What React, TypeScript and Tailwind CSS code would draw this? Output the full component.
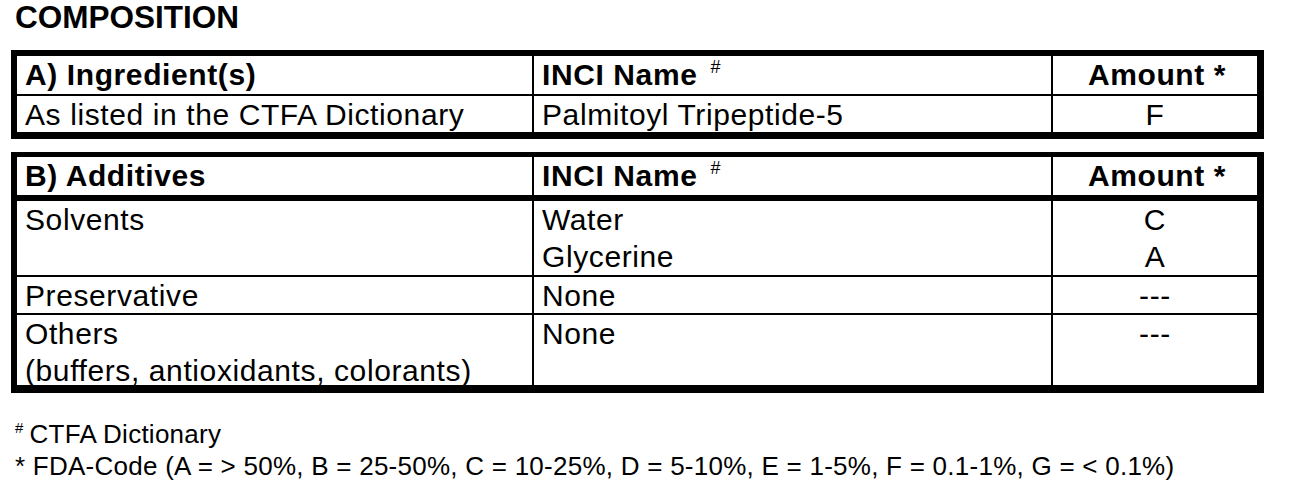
import React from 'react';

const font = { fontFamily: '"Liberation Sans", Arial, sans-serif' };

const Sup: React.FC = () => (
  <span className="relative top-[-12px] ml-[13px] text-[18px] font-normal tracking-normal">#</span>
);

type Row = { label: string[]; inci: string[]; amount: string[]; h: string };

const additives: Row[] = [
  { label: ['Solvents'], inci: ['Water', 'Glycerine'], amount: ['C', 'A'], h: 'h-[74px]' },
  { label: ['Preservative'], inci: ['None'], amount: ['---'], h: 'h-[38px]' },
  {
    label: ['Others', '(buffers, antioxidants, colorants)'],
    inci: ['None'],
    amount: ['---'],
    h: 'h-[72px]',
  },
];

const Lines: React.FC<{ items: string[] }> = ({ items }) => (
  <>
    {items.map((t) => (
      <div key={t}>{t}</div>
    ))}
  </>
);

export default function App() {
  return (
    <div className="min-h-screen bg-white text-black" style={font}>
      <div className="px-[11px] pt-0">
        <h1 className="pl-[4px] text-[31.5px] font-bold leading-[35px]">COMPOSITION</h1>

        {/* A) Ingredients */}
        <div className="mt-[15px] w-[1253px] border-[6px] border-b-[7px] border-r-[7px] border-black text-[30px] leading-[37px] tracking-[0.6px]">
          <div className="flex h-[38px] font-bold">
            <div className="w-[515px] pl-[8px]">A) Ingredient(s)</div>
            <div className="w-[519px] border-l-2 border-black pl-[8px]">
              INCI Name<Sup />
            </div>
            <div className="flex-1 border-l-2 border-black pl-[4px] text-center">Amount *</div>
          </div>
          <div className="flex h-[38px] border-t-2 border-black">
            <div className="w-[515px] pl-[8px]">As listed in the CTFA Dictionary</div>
            <div className="w-[519px] border-l-2 border-black pl-[8px]">Palmitoyl Tripeptide-5</div>
            <div className="flex-1 border-l-2 border-black text-center">F</div>
          </div>
        </div>

        {/* B) Additives */}
        <div className="mt-[13px] w-[1253px] border-[6px] border-t-[5px] border-b-[8px] border-r-[7px] border-black text-[30px] leading-[37px] tracking-[0.6px]">
          <div className="flex h-[44px] border-b-[6px] border-black font-bold">
            <div className="w-[515px] pl-[8px]">B) Additives</div>
            <div className="w-[519px] border-l-2 border-black pl-[8px]">
              INCI Name<Sup />
            </div>
            <div className="flex-1 border-l-2 border-black pl-[4px] text-center">Amount *</div>
          </div>
          {additives.map((r, i) => (
            <div
              key={r.label[0]}
              className={`flex ${r.h} ${i > 0 ? 'border-t-2 border-black' : ''}`}
            >
              <div className="w-[515px] pl-[8px]">
                <Lines items={r.label} />
              </div>
              <div className="w-[519px] border-l-2 border-black pl-[8px]">
                <Lines items={r.inci} />
              </div>
              <div className="flex-1 border-l-2 border-black text-center">
                <Lines items={r.amount} />
              </div>
            </div>
          ))}
        </div>

        <div className="mt-[27px] pl-[4px] text-[26px] leading-[29px] tracking-[0.25px]">
          <div>
            <span className="relative top-[-10px] mr-[6px] text-[15px]">#</span>CTFA Dictionary
          </div>
          <div>
            * FDA-Code (A = &gt; 50%, B = 25-50%, C = 10-25%, D = 5-10%, E = 1-5%, F = 0.1-1%, G = &lt; 0.1%)
          </div>
        </div>
      </div>
    </div>
  );
}
